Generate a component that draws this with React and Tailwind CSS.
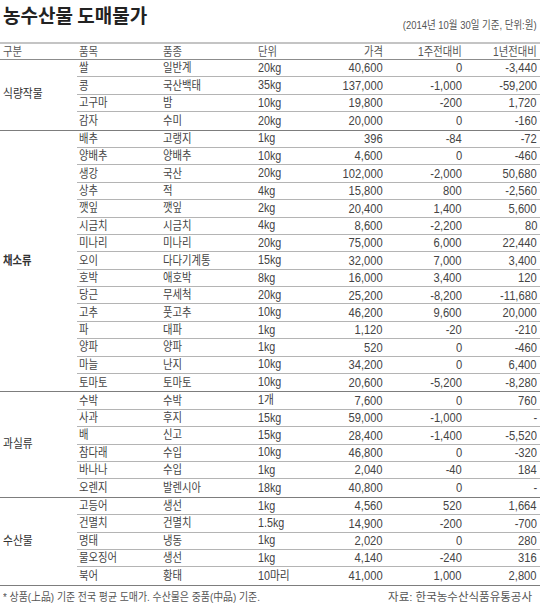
const groups = [
  {
    name: '식량작물',
    rows: [
      ['쌀', '일반계', '20kg', '40,600', '0', '-3,440'],
      ['콩', '국산백태', '35kg', '137,000', '-1,000', '-59,200'],
      ['고구마', '밤', '10kg', '19,800', '-200', '1,720'],
      ['감자', '수미', '20kg', '20,000', '0', '-160'],
    ],
  },
  {
    name: '채소류',
    bold: true,
    rows: [
      ['배추', '고랭지', '1kg', '396', '-84', '-72'],
      ['양배추', '양배추', '10kg', '4,600', '0', '-460'],
      ['생강', '국산', '20kg', '102,000', '-2,000', '50,680'],
      ['상추', '적', '4kg', '15,800', '800', '-2,560'],
      ['깻잎', '깻잎', '2kg', '20,400', '1,400', '5,600'],
      ['시금치', '시금치', '4kg', '8,600', '-2,200', '80'],
      ['미나리', '미나리', '20kg', '75,000', '6,000', '22,440'],
      ['오이', '다다기계통', '15kg', '32,000', '7,000', '3,400'],
      ['호박', '애호박', '8kg', '16,000', '3,400', '120'],
      ['당근', '무세척', '20kg', '25,200', '-8,200', '-11,680'],
      ['고추', '풋고추', '10kg', '46,200', '9,600', '20,000'],
      ['파', '대파', '1kg', '1,120', '-20', '-210'],
      ['양파', '양파', '1kg', '520', '0', '-460'],
      ['마늘', '난지', '10kg', '34,200', '0', '6,400'],
      ['토마토', '토마토', '10kg', '20,600', '-5,200', '-8,280'],
    ],
  },
  {
    name: '과실류',
    rows: [
      ['수박', '수박', '1개', '7,600', '0', '760'],
      ['사과', '후지', '15kg', '59,000', '-1,000', '-'],
      ['배', '신고', '15kg', '28,400', '-1,400', '-5,520'],
      ['참다래', '수입', '10kg', '46,800', '0', '-320'],
      ['바나나', '수입', '1kg', '2,040', '-40', '184'],
      ['오렌지', '발렌시아', '18kg', '40,800', '0', '-'],
    ],
  },
  {
    name: '수산물',
    rows: [
      ['고등어', '생선', '1kg', '4,560', '520', '1,664'],
      ['건멸치', '건멸치', '1.5kg', '14,900', '-200', '-700'],
      ['명태', '냉동', '1kg', '2,020', '0', '280'],
      ['물오징어', '생선', '1kg', '4,140', '-240', '316'],
      ['북어', '황태', '10마리', '41,000', '1,000', '2,800'],
    ],
  },
];

// narrow newspaper type: squeeze glyphs horizontally
const Sq = ({ children, right }) => (
  <span
    className={
      right
        ? 'inline-block origin-right scale-x-[0.86] whitespace-nowrap'
        : 'inline-block origin-left scale-x-[0.86] whitespace-nowrap'
    }
  >
    {children}
  </span>
);

const Cells = ({ cols, head }) => (
  <>
    <div className="w-[84px] pl-[2px]"><Sq>{cols[0]}</Sq></div>
    <div className="w-[95px] pl-[2px]"><Sq>{cols[1]}</Sq></div>
    <div className={head ? 'w-[65px] pl-[2px]' : 'w-[65px] pl-[2px] text-[12.5px]'}><Sq>{cols[2]}</Sq></div>
    <div className={head ? 'w-[62px] text-right' : 'w-[62px] text-right text-[13px]'}><Sq right>{cols[3]}</Sq></div>
    <div className={head ? 'w-[79px] text-right' : 'w-[79px] text-right text-[13px]'}><Sq right>{cols[4]}</Sq></div>
    <div className={head ? 'w-[75px] text-right' : 'w-[75px] text-right text-[13px]'}><Sq right>{cols[5]}</Sq></div>
  </>
);

export default function App() {
  return (
    <div className="w-[540px] h-[609px] bg-white text-[#444] font-['Liberation_Sans','Noto_Sans_CJK_KR',sans-serif] overflow-hidden">
      <div className="h-[42px] flex justify-between px-[3px]">
        <div className="pt-[4px] text-[19px] leading-[22px] font-bold text-[#222] font-['Noto_Sans_CJK_KR',sans-serif]">
          농수산물 도매물가
        </div>
        <div className="pt-[19px] text-[11px] leading-[12px] text-[#555]">
          <Sq right>(2014년 10월 30일 기준, 단위:원)</Sq>
        </div>
      </div>

      <div className="flex h-[18px] items-center border-t-2 border-t-[#c4c4c4] border-b border-b-[#8c8c8c] text-[12px] text-[#555] pr-[3px]">
        <div className="w-[77px] pl-[3px]"><Sq>구분</Sq></div>
        <Cells head cols={['품목', '품종', '단위', '가격', '1주전대비', '1년전대비']} />
      </div>

      {groups.map((g) => (
        <div key={g.name} className="flex border-b border-[#7d7d7d]">
          <div
            className={
              g.bold
                ? 'w-[77px] flex items-center pl-[3px] text-[12px] font-bold text-[#333]'
                : 'w-[77px] flex items-center pl-[3px] text-[12.5px] text-[#333]'
            }
          >
            <Sq>{g.name}</Sq>
          </div>
          <div className="flex-1">
            {g.rows.map((r) => (
              <div
                key={r[0]}
                className="flex h-[17.4px] items-center border-b border-[#b4b4b4] last:border-b-0 text-[12px] pr-[3px]"
              >
                <Cells cols={r} />
              </div>
            ))}
          </div>
        </div>
      ))}

      <div className="flex justify-between pl-[3px] pr-[8px] pt-[4px] text-[11.5px] leading-[14px] text-[#555]">
        <Sq>* 상품(上品) 기준 전국 평균 도매가. 수산물은 중품(中品) 기준.</Sq>
        <span className="whitespace-nowrap">자료: 한국농수산식품유통공사</span>
      </div>
    </div>
  );
}
